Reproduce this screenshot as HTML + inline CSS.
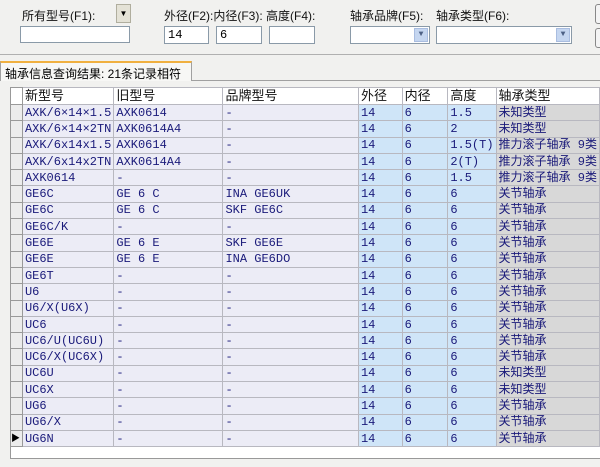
<!DOCTYPE html>
<html><head><meta charset="utf-8"><style>
*{margin:0;padding:0;box-sizing:border-box}
body{width:600px;height:467px;overflow:hidden;background:#f1f1ef;font-family:"Liberation Sans","SimSun","Noto Sans CJK SC",sans-serif;font-size:12px;color:#000;position:relative}
.a{position:absolute}
.lbl{font-size:12px;color:#111;white-space:nowrap}
.inp{background:#fff;border:1px solid #8a9aa8;height:18px;font-size:12px;padding:1px 3px;font-family:"Liberation Mono","Noto Sans CJK SC",monospace}
.cb{position:absolute;right:1px;top:1px;width:14px;height:14px;background:#c5d6f0;border:1px solid #a9bde0;color:#4d6185;font-size:8px;text-align:center;line-height:12px}
table{position:absolute;left:10px;top:87px;border-collapse:collapse;table-layout:fixed;font-family:"Liberation Mono","Noto Sans CJK SC",monospace;font-size:12px}
td{height:16.3px;border:1px solid #b8b8c0;padding:0 2px;white-space:nowrap;overflow:hidden;color:#1a1a7a;line-height:14px}
tr.h td{background:#fff;color:#111;height:17px;font-family:"Liberation Sans","Noto Sans CJK SC",sans-serif;font-size:13px}
td.r{background:#ececec;border-color:#999}
td.c{background:#ececf6}
td.n{background:#cfe5f8}
td.t{background:#d8d8d8}
td.t2{background:#fff}
</style></head><body>
<div class="a" style="left:0;top:0;width:600px;height:55px;border-bottom:1px solid #b0b0b0;background:#f1f1ef"></div>
<div class="a lbl" style="left:22px;top:7px">所有型号(F1):</div>
<div class="a" style="left:116px;top:4px;width:15px;height:19px;background:#e4e2d6;border:1px solid #b0ae9e;font-size:8px;text-align:center;line-height:17px">▼</div>
<div class="a inp" style="left:20px;top:26px;width:110px;height:17px"></div>
<div class="a lbl" style="left:164px;top:7px">外径(F2):内径(F3): 高度(F4):</div>
<div class="a inp" style="left:164px;top:26px;width:45px;height:18px">14</div>
<div class="a inp" style="left:216px;top:26px;width:46px;height:18px">6</div>
<div class="a inp" style="left:269px;top:26px;width:46px;height:18px"></div>
<div class="a lbl" style="left:350px;top:7px">轴承品牌(F5):</div>
<div class="a lbl" style="left:436px;top:7px">轴承类型(F6):</div>
<div class="a inp" style="left:350px;top:26px;width:80px;height:18px"><div class="cb">▼</div></div>
<div class="a inp" style="left:436px;top:26px;width:136px;height:18px"><div class="cb">▼</div></div>
<div class="a" style="left:595px;top:4px;width:10px;height:20px;border:1px solid #888;border-radius:3px;background:#f4f4f4"></div>
<div class="a" style="left:595px;top:28px;width:10px;height:20px;border:1px solid #888;border-radius:3px;background:#f4f4f4"></div>
<div class="a" style="left:0;top:80px;width:600px;height:387px;border-top:1px solid #a0a0a0;background:#f1f1ef"></div>
<div class="a" style="left:0;top:61px;width:192px;height:20px;background:#f7f7f5;border:1px solid #a0a0a0;border-top:2px solid #f0b040;border-bottom:none;padding:2px 0 0 4px;font-size:12px;white-space:nowrap">轴承信息查询结果: 21条记录相符</div>
<div class="a" style="left:10px;top:87px;width:592px;height:372px;background:#fff;border:1px solid #999"></div>
<table>
<colgroup><col style="width:12px"><col style="width:91px"><col style="width:110px"><col style="width:137px"><col style="width:44px"><col style="width:46px"><col style="width:48px"><col style="width:102px"></colgroup>
<tr class="h"><td class="r" style="background:#fff"></td><td>新型号</td><td>旧型号</td><td>品牌型号</td><td>外径</td><td>内径</td><td>高度</td><td>轴承类型</td></tr>
<tr><td class="r"></td><td class="c">AXK/6×14×1.5</td><td class="c">AXK0614</td><td class="c">-</td><td class="n">14</td><td class="n">6</td><td class="n">1.5</td><td class="t">未知类型</td></tr>
<tr><td class="r"></td><td class="c">AXK/6×14×2TN</td><td class="c">AXK0614A4</td><td class="c">-</td><td class="n">14</td><td class="n">6</td><td class="n">2</td><td class="t">未知类型</td></tr>
<tr><td class="r"></td><td class="c">AXK/6x14x1.5</td><td class="c">AXK0614</td><td class="c">-</td><td class="n">14</td><td class="n">6</td><td class="n">1.5(T)</td><td class="t">推力滚子轴承 9类</td></tr>
<tr><td class="r"></td><td class="c">AXK/6x14x2TN</td><td class="c">AXK0614A4</td><td class="c">-</td><td class="n">14</td><td class="n">6</td><td class="n">2(T)</td><td class="t">推力滚子轴承 9类</td></tr>
<tr><td class="r"></td><td class="c">AXK0614</td><td class="c">-</td><td class="c">-</td><td class="n">14</td><td class="n">6</td><td class="n">1.5</td><td class="t">推力滚子轴承 9类</td></tr>
<tr><td class="r"></td><td class="c">GE6C</td><td class="c">GE 6 C</td><td class="c">INA GE6UK</td><td class="n">14</td><td class="n">6</td><td class="n">6</td><td class="t">关节轴承</td></tr>
<tr><td class="r"></td><td class="c">GE6C</td><td class="c">GE 6 C</td><td class="c">SKF GE6C</td><td class="n">14</td><td class="n">6</td><td class="n">6</td><td class="t">关节轴承</td></tr>
<tr><td class="r"></td><td class="c">GE6C/K</td><td class="c">-</td><td class="c">-</td><td class="n">14</td><td class="n">6</td><td class="n">6</td><td class="t">关节轴承</td></tr>
<tr><td class="r"></td><td class="c">GE6E</td><td class="c">GE 6 E</td><td class="c">SKF GE6E</td><td class="n">14</td><td class="n">6</td><td class="n">6</td><td class="t">关节轴承</td></tr>
<tr><td class="r"></td><td class="c">GE6E</td><td class="c">GE 6 E</td><td class="c">INA GE6DO</td><td class="n">14</td><td class="n">6</td><td class="n">6</td><td class="t">关节轴承</td></tr>
<tr><td class="r"></td><td class="c">GE6T</td><td class="c">-</td><td class="c">-</td><td class="n">14</td><td class="n">6</td><td class="n">6</td><td class="t">关节轴承</td></tr>
<tr><td class="r"></td><td class="c">U6</td><td class="c">-</td><td class="c">-</td><td class="n">14</td><td class="n">6</td><td class="n">6</td><td class="t">关节轴承</td></tr>
<tr><td class="r"></td><td class="c">U6/X(U6X)</td><td class="c">-</td><td class="c">-</td><td class="n">14</td><td class="n">6</td><td class="n">6</td><td class="t">关节轴承</td></tr>
<tr><td class="r"></td><td class="c">UC6</td><td class="c">-</td><td class="c">-</td><td class="n">14</td><td class="n">6</td><td class="n">6</td><td class="t">关节轴承</td></tr>
<tr><td class="r"></td><td class="c">UC6/U(UC6U)</td><td class="c">-</td><td class="c">-</td><td class="n">14</td><td class="n">6</td><td class="n">6</td><td class="t">关节轴承</td></tr>
<tr><td class="r"></td><td class="c">UC6/X(UC6X)</td><td class="c">-</td><td class="c">-</td><td class="n">14</td><td class="n">6</td><td class="n">6</td><td class="t">关节轴承</td></tr>
<tr><td class="r"></td><td class="c">UC6U</td><td class="c">-</td><td class="c">-</td><td class="n">14</td><td class="n">6</td><td class="n">6</td><td class="t">未知类型</td></tr>
<tr><td class="r"></td><td class="c">UC6X</td><td class="c">-</td><td class="c">-</td><td class="n">14</td><td class="n">6</td><td class="n">6</td><td class="t">未知类型</td></tr>
<tr><td class="r"></td><td class="c">UG6</td><td class="c">-</td><td class="c">-</td><td class="n">14</td><td class="n">6</td><td class="n">6</td><td class="t">关节轴承</td></tr>
<tr><td class="r"></td><td class="c">UG6/X</td><td class="c">-</td><td class="c">-</td><td class="n">14</td><td class="n">6</td><td class="n">6</td><td class="t">关节轴承</td></tr>
<tr><td class="r" style="font-size:9px;color:#000;padding:0">▶</td><td class="c">UG6N</td><td class="c">-</td><td class="c">-</td><td class="n">14</td><td class="n">6</td><td class="n">6</td><td class="t">关节轴承</td></tr>
</table>
</body></html>
